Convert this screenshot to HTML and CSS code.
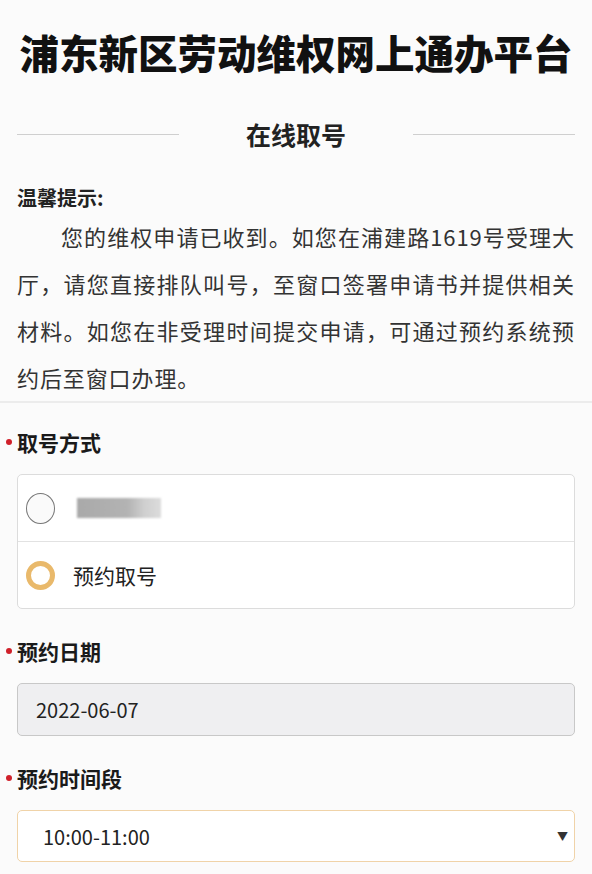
FILE: index.html
```html
<!DOCTYPE html>
<html lang="zh-CN">
<head>
    <meta charset="UTF-8">
    <meta name="viewport" content="width=device-width, initial-scale=1.0">
    <title>在线取号</title>
    <link rel="stylesheet" href="styles.css">
</head>
<body>
    <div class="page">
        <h1 class="title">浦东新区劳动维权网上通办平台</h1>
        <div class="subtitle">
            <span class="line"></span>
            <span class="subtitle-text">在线取号</span>
            <span class="line"></span>
        </div>
        <div class="notice">
            <div class="notice-title">温馨提示:</div>
            <p class="notice-text">您的维权申请已收到。如您在浦建路1619号受理大厅，请您直接排队叫号，至窗口签署申请书并提供相关材料。如您在非受理时间提交申请，可通过预约系统预约后至窗口办理。</p>
        </div>
    </div>
    <form class="form">
        <div class="field">
            <div class="label">取号方式</div>
            <div class="radio-group">
                <label class="radio-row">
                    <span class="radio"></span>
                    <span class="blurred"></span>
                </label>
                <label class="radio-row">
                    <span class="radio checked"></span>
                    <span class="radio-text">预约取号</span>
                </label>
            </div>
        </div>
        <div class="field">
            <div class="label">预约日期</div>
            <div class="input disabled">2022-06-07</div>
        </div>
        <div class="field">
            <div class="label">预约时间段</div>
            <div class="input select">
                <span>10:00-11:00</span>
                <span class="arrow">&#9660;</span>
            </div>
        </div>
    </form>
</body>
</html>
```
FILE: styles.css
```css
body {
    margin: 0;
    background-color: #fbfbfb;
    font-family: "Noto Sans CJK SC", "Noto Sans", sans-serif;
    color: #222;
}
.page {
    padding: 0 17px;
    border-bottom: 2px solid #ececec;
}
.title {
    margin: 0 -10px;
    padding-top: 23px;
    font-size: 39.5px;
    font-weight: 900;
    text-align: center;
    white-space: nowrap;
    line-height: 58px;
    color: #111;
}
.subtitle {
    display: flex;
    align-items: center;
    margin-top: 36px;
    height: 34px;
}
.subtitle .line {
    flex: 1;
    height: 1px;
    background-color: #cfcfcf;
}
.subtitle-text {
    width: 234px;
    text-align: center;
    font-size: 25px;
    font-weight: 700;
    color: #222;
}
.notice {
    padding-top: 32px;
    padding-bottom: 0;
}
.notice-title {
    font-size: 20px;
    font-weight: 700;
    line-height: 30px;
}
.notice-text {
    margin: 0;
    font-size: 22px;
    line-height: 47px;
    text-indent: 44px;
    text-align: justify;
    color: #333;
    letter-spacing: 0.9px;
}
.form {
    padding: 24px 17px 0;
}
.field {
    margin-bottom: 27px;
}
.label {
    position: relative;
    font-size: 21px;
    font-weight: 700;
    line-height: 30px;
    margin-bottom: 17px;
    color: #1a1a1a;
}
.label::before {
    content: "";
    position: absolute;
    left: -11px;
    top: 12px;
    width: 6px;
    height: 6px;
    border-radius: 50%;
    background-color: #d0202a;
}
.radio-group {
    border: 1px solid #dcdcdc;
    border-radius: 5px;
    background-color: #fff;
}
.radio-row {
    display: flex;
    align-items: center;
    height: 66px;
    padding-left: 8px;
}
.radio-row + .radio-row {
    border-top: 1px solid #e2e2e2;
}
.radio {
    box-sizing: border-box;
    width: 29px;
    height: 31px;
    border: 1px solid #777;
    border-radius: 50%;
    background-color: #fafafa;
}
.radio.checked {
    border: 5px solid #e9b96b;
    background-color: #fff;
    width: 29px;
    height: 29px;
}
.blurred {
    margin-left: 22px;
    width: 84px;
    height: 20px;
    background: linear-gradient(90deg, #a9a9a9 0, #b3b3b3 60%, #cfcfcf 80%, #dcdcdc 100%);
    filter: blur(1px);
}
.radio-text {
    margin-left: 18px;
    font-size: 21px;
    color: #222;
}
.input {
    box-sizing: border-box;
    display: flex;
    align-items: center;
    height: 53px;
    padding: 0 18px;
    border: 1px solid #c8c8c8;
    border-radius: 5px;
    font-size: 20px;
    color: #222;
}
.input.disabled {
    background-color: #efeff1;
}
.select {
    justify-content: space-between;
    height: 52px;
    padding: 0 6px 0 25px;
    border-color: #f0d3a8;
    background-color: #fff;
}
.arrow {
    font-size: 11px;
    color: #333;
}
```
